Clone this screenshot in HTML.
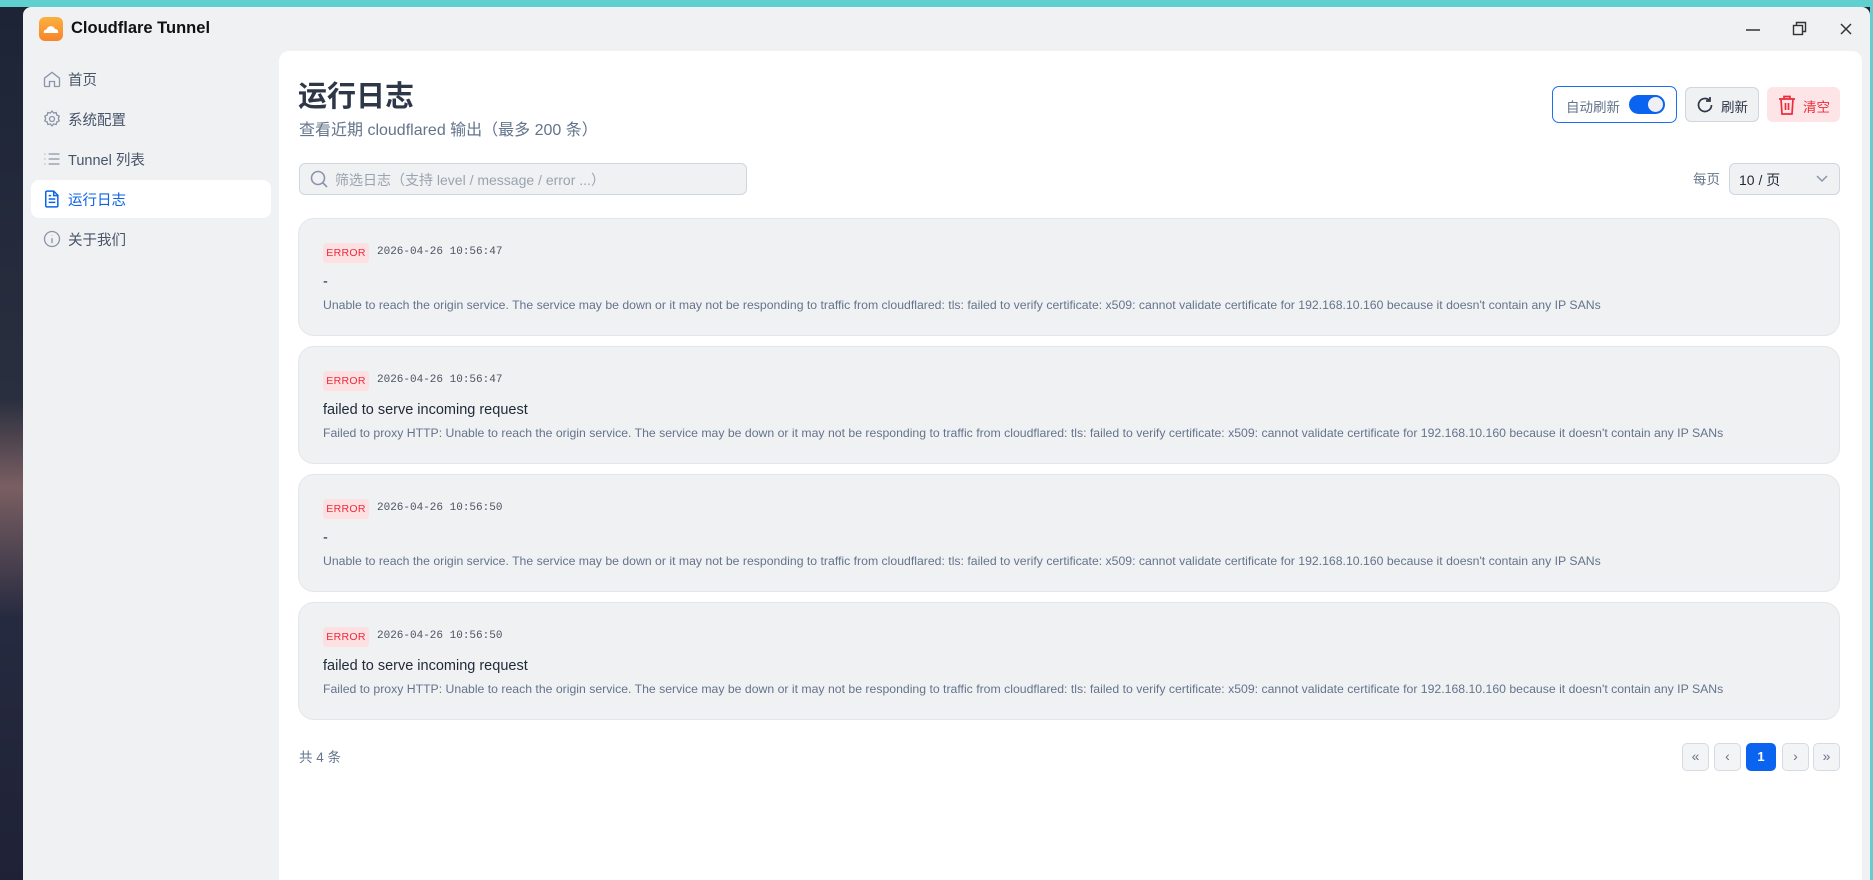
<!DOCTYPE html>
<html><head><meta charset="utf-8">
<style>
*{box-sizing:border-box;margin:0;padding:0}
body{width:1873px;height:880px;overflow:hidden;background:#1e2233;font-family:"Liberation Sans","Noto Sans CJK SC",sans-serif;position:relative}
.abs{position:absolute}
.top{left:0;top:0;width:1873px;height:7px;background:#5fcfcf}
.dock{left:0;top:7px;width:23px;height:873px;background:linear-gradient(#1c2436,#2a2f3f 45%,#7a5f62 55%,#262a40 70%,#1f2236)}
.win{left:23px;top:7px;width:1847px;height:873px;background:#f0f1f3;border-radius:8px 8px 0 0}
.rstrip{left:1870px;top:0;width:3px;height:880px;background:#5fcfcf}
.nav{position:absolute;left:31px;width:240px;height:38px;border-radius:8px;display:flex;align-items:center;padding-left:11px;font-size:14.5px;color:#475569;font-family:"Liberation Sans","Noto Sans CJK SC",sans-serif}
.nav svg{width:20px;height:20px;margin-right:6px}
.nav.act{background:#fff;color:#0b63e5}
.panel{left:279px;top:51px;width:1583px;height:829px;background:#fff;border-radius:10px 10px 0 0}
.card{position:absolute;left:298px;width:1542px;height:118px;background:#f0f1f3;border:1px solid #e3e6ea;border-radius:16px}
.badge{position:absolute;left:24px;top:24px;width:46px;height:20px;background:#fde0e2;color:#ef2b3b;font-size:10.5px;border-radius:4px;text-align:center;line-height:20px;letter-spacing:.3px}
.ts{position:absolute;left:78px;top:27px;font-family:"Liberation Mono",monospace;font-size:11px;color:#4b5563}
.t{position:absolute;left:24px;top:55px;font-size:14.5px;color:#1f2937}
.d{position:absolute;left:24px;top:79px;font-size:12.25px;color:#64748b;white-space:nowrap}
.pg{position:absolute;top:743px;width:27px;height:28px;border:1px solid #d6dbe2;border-radius:5px;background:#f3f4f6;color:#64748b;font-size:14px;text-align:center;line-height:25px}
</style></head><body>
<div class="abs top"></div>
<div class="abs dock"></div>
<div class="abs rstrip"></div>
<div class="abs win"></div>
<div class="abs" style="left:39px;top:17px;width:24px;height:24px;border-radius:6px;background:linear-gradient(#fbb040,#f7852a)">
<svg width="24" height="24" viewBox="0 0 24 24"><path d="M5 16h14a3 3 0 0 0-3-4 4.5 4.5 0 0 0-8.5 0.5A2.5 2.5 0 0 0 5 16z" fill="#fff"/></svg></div>
<div class="abs" style="left:71px;top:19px;font-size:16.5px;font-weight:bold;color:#111">Cloudflare Tunnel</div>
<svg class="abs" style="left:1745px;top:22px" width="16" height="16"><path d="M1 8h14" stroke="#333" stroke-width="1.5"/></svg>
<svg class="abs" style="left:1792px;top:21px" width="16" height="16"><rect x="1.5" y="4.5" width="9" height="9" fill="none" stroke="#333" stroke-width="1.4"/><path d="M4.5 4.5V1.5h9v9h-3" fill="none" stroke="#333" stroke-width="1.4"/></svg>
<svg class="abs" style="left:1839px;top:22px" width="14" height="14"><path d="M2 2l10 10M12 2L2 12" stroke="#333" stroke-width="1.5"/></svg>
<div class="nav" style="top:60px"><svg viewBox="0 0 24 24" fill="none" stroke="#8a96a8" stroke-width="1.6"><path d="M3 11l9-7 9 7v9a1 1 0 0 1-1 1h-5v-6h-6v6H4a1 1 0 0 1-1-1z"/></svg>首页</div>
<div class="nav" style="top:100px"><svg viewBox="0 0 24 24" fill="none" stroke="#8a96a8" stroke-width="1.6"><circle cx="12" cy="12" r="3"/><path d="M12 2.5l2 2.3 3-.6.8 3 2.8 1.3-1 2.9 1 2.9-2.8 1.3-.8 3-3-.6-2 2.3-2-2.3-3 .6-.8-3-2.8-1.3 1-2.9-1-2.9 2.8-1.3.8-3 3 .6z"/></svg>系统配置</div>
<div class="nav" style="top:140px"><svg viewBox="0 0 24 24" fill="none" stroke="#8a96a8" stroke-width="1.6"><path d="M8 6h13M8 12h13M8 18h13M3 6h1M3 12h1M3 18h1"/></svg>Tunnel 列表</div>
<div class="nav act" style="top:180px"><svg viewBox="0 0 24 24" fill="none" stroke="#0b63e5" stroke-width="1.8"><path d="M6 2.5h8l5 5V20a1.5 1.5 0 0 1-1.5 1.5h-11.5A1.5 1.5 0 0 1 4.5 20V4A1.5 1.5 0 0 1 6 2.5z"/><path d="M14 2.5V8h5M8 12h8M8 16h8M8 8h3"/></svg>运行日志</div>
<div class="nav" style="top:220px"><svg viewBox="0 0 24 24" fill="none" stroke="#8a96a8" stroke-width="1.6"><circle cx="12" cy="12" r="9"/><path d="M12 11v6M12 7.5v.5"/></svg>关于我们</div>
<div class="abs panel"></div>
<div class="abs" style="left:298px;top:73px;font-size:29px;font-weight:bold;color:#2d3748">运行日志</div>
<div class="abs" style="left:299px;top:116px;font-size:16px;color:#64748b">查看近期 cloudflared 输出（最多 200 条）</div>
<div class="abs" style="left:299px;top:163px;width:448px;height:32px;border:1px solid #cfd6df;border-radius:6px;background:#f0f1f3"></div>
<svg class="abs" style="left:309px;top:169px" width="20" height="20" viewBox="0 0 20 20" fill="none" stroke="#8a96a8" stroke-width="1.6"><circle cx="9" cy="9" r="6.5"/><path d="M14 14l4 4"/></svg>
<div class="abs" style="left:335px;top:170px;font-size:14px;color:#9aa3b0">筛选日志（支持 level / message / error ...）</div>
<div class="abs" style="left:1552px;top:86px;width:125px;height:37px;border:1.5px solid #1a6ff0;border-radius:7px;background:#fff"></div>
<div class="abs" style="left:1566px;top:96px;font-size:13.5px;color:#64748b">自动刷新</div>
<div class="abs" style="left:1629px;top:95px;width:36px;height:19px;border-radius:10px;background:#0a64f0"><div style="position:absolute;right:2px;top:2px;width:15px;height:15px;border-radius:50%;background:#eef0f4"></div></div>
<div class="abs" style="left:1685px;top:87px;width:74px;height:35px;border:1px solid #cfd6df;border-radius:6px;background:#f0f1f3"></div>
<svg class="abs" style="left:1695px;top:95px" width="20" height="20" viewBox="0 0 20 20" fill="none" stroke="#2d3748" stroke-width="1.7"><path d="M16.5 10a6.5 6.5 0 1 1-2-4.7"/><path d="M15 2v4h-4"/></svg>
<div class="abs" style="left:1721px;top:96px;font-size:13.5px;color:#2d3748">刷新</div>
<div class="abs" style="left:1767px;top:87px;width:73px;height:35px;border-radius:6px;background:#fde4e6"></div>
<svg class="abs" style="left:1777px;top:94px" width="20" height="22" viewBox="0 0 20 22" fill="none" stroke="#ef2b3b" stroke-width="1.7"><path d="M2 5h16M7 5V2.5h6V5M4 5l1 15h10l1-15M8.5 9v7M11.5 9v7"/></svg>
<div class="abs" style="left:1803px;top:96px;font-size:13.5px;color:#ef2b3b">清空</div>
<div class="abs" style="left:1693px;top:168px;font-size:13.5px;color:#64748b">每页</div>
<div class="abs" style="left:1729px;top:163px;width:111px;height:32px;border:1px solid #cfd6df;border-radius:6px;background:#f0f1f3"></div>
<div class="abs" style="left:1739px;top:170px;font-size:14px;color:#1f2937">10 / 页</div>
<svg class="abs" style="left:1815px;top:174px" width="14" height="10"><path d="M2 2l5 5 5-5" fill="none" stroke="#8a96a8" stroke-width="1.5"/></svg>
<div class="card" style="top:218px"><div class="badge">ERROR</div><div class="ts">2026-04-26 10:56:47</div><div class="t">-</div><div class="d">Unable to reach the origin service. The service may be down or it may not be responding to traffic from cloudflared: tls: failed to verify certificate: x509: cannot validate certificate for 192.168.10.160 because it doesn't contain any IP SANs</div></div>
<div class="card" style="top:346px"><div class="badge">ERROR</div><div class="ts">2026-04-26 10:56:47</div><div class="t">failed to serve incoming request</div><div class="d">Failed to proxy HTTP: Unable to reach the origin service. The service may be down or it may not be responding to traffic from cloudflared: tls: failed to verify certificate: x509: cannot validate certificate for 192.168.10.160 because it doesn't contain any IP SANs</div></div>
<div class="card" style="top:474px"><div class="badge">ERROR</div><div class="ts">2026-04-26 10:56:50</div><div class="t">-</div><div class="d">Unable to reach the origin service. The service may be down or it may not be responding to traffic from cloudflared: tls: failed to verify certificate: x509: cannot validate certificate for 192.168.10.160 because it doesn't contain any IP SANs</div></div>
<div class="card" style="top:602px"><div class="badge">ERROR</div><div class="ts">2026-04-26 10:56:50</div><div class="t">failed to serve incoming request</div><div class="d">Failed to proxy HTTP: Unable to reach the origin service. The service may be down or it may not be responding to traffic from cloudflared: tls: failed to verify certificate: x509: cannot validate certificate for 192.168.10.160 because it doesn't contain any IP SANs</div></div>
<div class="abs" style="left:299px;top:746px;font-size:13.5px;color:#64748b">共 4 条</div>
<div class="pg" style="left:1682px">«</div>
<div class="pg" style="left:1714px">‹</div>
<div class="pg" style="left:1746px;width:30px;background:#0a64f0;border-color:#0a64f0;color:#fff;font-weight:bold;font-size:13px">1</div>
<div class="pg" style="left:1782px">›</div>
<div class="pg" style="left:1813px">»</div>
</body></html>
